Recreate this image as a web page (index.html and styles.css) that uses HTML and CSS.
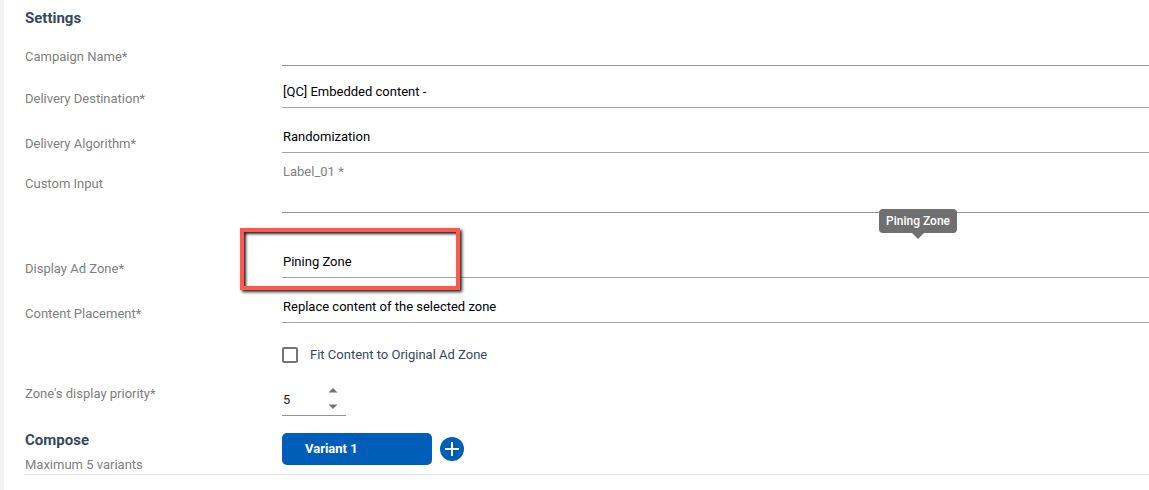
FILE: index.html
```
<!DOCTYPE html>
<html lang="en">
<head>
<meta charset="utf-8">
<title>Campaign Settings</title>
<link rel="stylesheet" href="styles.css">
</head>
<body>
<main class="panel">
  <form class="settings">
    <h2 class="heading">Settings</h2>
    <div class="row row-name">
      <label class="label" for="name">Campaign Name*</label>
      <input class="control dark" id="name" type="text">
    </div>
    <div class="row row-destination">
      <label class="label" for="destination">Delivery Destination*</label>
      <select class="control" id="destination"><option>[QC] Embedded content -</option></select>
    </div>
    <div class="row">
      <label class="label" for="algorithm">Delivery Algorithm*</label>
      <select class="control" id="algorithm"><option>Randomization</option></select>
    </div>
    <div class="row row-custom">
      <span class="label">Custom Input</span>
      <div class="field">
        <label class="label" for="custom">Label_01 *</label>
        <input class="control dark" id="custom" type="text">
      </div>
    </div>
    <div class="row row-zone">
      <label class="label" for="zone">Display Ad Zone*</label>
      <div class="field">
        <select class="control" id="zone"><option>Pining Zone</option></select>
        <div class="highlight"></div>
        <div class="tooltip" role="tooltip">Pining Zone</div>
      </div>
    </div>
    <div class="row">
      <label class="label" for="placement">Content Placement*</label>
      <select class="control" id="placement"><option>Replace content of the selected zone</option></select>
    </div>
    <div class="row row-check">
      <label class="check"><input class="box" type="checkbox">Fit Content to Original Ad Zone</label>
    </div>
    <div class="row row-priority">
      <label class="label" for="priority">Zone's display priority*</label>
      <div class="stepper">
        <input class="number" id="priority" type="number" value="5">
        <div class="arrows">
          <button class="arrow" type="button" aria-label="Increase"><svg width="10" height="5" viewBox="0 0 10 5"><path d="M0.5 4.5L5 0L9.500 4.5Z" fill="#757575"/></svg></button>
          <button class="arrow" type="button" aria-label="Decrease"><svg width="10" height="5" viewBox="0 0 10 5"><path d="M0.5 0.5L5 5L9.500 0.5Z" fill="#757575"/></svg></button>
        </div>
      </div>
    </div>
    <div class="row row-compose">
      <div class="compose">
        <h2 class="heading">Compose</h2>
        <span class="label">Maximum 5 variants</span>
      </div>
      <div class="variants">
        <button class="variant" type="button">Variant 1</button>
        <button class="add" type="button" aria-label="Add variant"><svg width="24" height="24" viewBox="0 0 24 24"><circle cx="12" cy="12" r="12" fill="#005eb8"/><path d="M12 5V19M5 12H19" stroke="#fff" stroke-width="2"/></svg></button>
      </div>
    </div>
  </form>
</main>
</body>
</html>
```
FILE: styles.css
```
* { box-sizing: border-box; }
body {
  margin: 0;
  background: #f3f3f3;
  color: #34495e;
  font: 13px/18px Roboto, "Liberation Sans", sans-serif;
  overflow-x: hidden;
}
button, input, select { font: inherit; margin: 0; }
button { border: 0; padding: 0; cursor: pointer; }
.panel {
  min-height: 100vh;
  margin-left: 4px;
  padding: 8px 0 0 20px;
  background: #fff;
}
.settings { display: flex; flex-direction: column; }
.heading {
  margin: 0;
  padding-left: 1px;
  color: #34495e;
  font-size: 15px;
  font-weight: 700;
  line-height: 20px;
}
.row {
  display: grid;
  grid-template-columns: 258px 1fr;
  align-items: end;
  min-height: 45px;
}
.row-name { min-height: 38px; }
.row-destination { min-height: 42px; }
.label { padding-left: 1px; color: #808080; }
.control {
  appearance: none;
  width: 100%;
  min-width: 0;
  height: 25px;
  padding: 0 1px 6px;
  border: 0;
  border-bottom: 1px solid #a6a6a6;
  border-radius: 0;
  background: transparent;
  color: #000;
  outline: 0;
}
.dark { border-color: #949494; }
.field { position: relative; display: flex; flex-direction: column; }
.row-custom {
  align-items: start;
  padding-top: 10px;
  min-height: 60px;
}
.row-custom > .label { padding-top: 12px; }
.row-custom .control { height: 32px; }
.row-zone { min-height: 65px; }
.highlight {
  position: absolute;
  left: -42px;
  bottom: -12px;
  width: 220px;
  height: 62px;
  border: 4px solid #ff594d;
  box-shadow: 2px 2px 3px #222, inset 2px 2px 3px #222;
  pointer-events: none;
}
.tooltip {
  position: absolute;
  right: 192px;
  bottom: 45px;
  padding: 3px 7px;
  border-radius: 4px;
  background: #707070;
  color: #fff;
  font-size: 12px;
  font-weight: 500;
}
.tooltip::after {
  content: "";
  position: absolute;
  top: 100%;
  left: 50%;
  margin-left: -6px;
  border: 6px solid transparent;
  border-top-color: #707070;
  border-bottom: 0;
}
.row-check { min-height: 41px; }
.check {
  grid-column: 2;
  display: flex;
  align-items: center;
  gap: 12px;
}
.box {
  appearance: none;
  width: 16px;
  height: 16px;
  margin: 0;
  border: 2px solid #757575;
  border-radius: 2px;
}
.row-priority { min-height: 52px; }
.row-priority > .label { padding-bottom: 13px; }
.stepper {
  display: flex;
  width: 64px;
  height: 34px;
  border-bottom: 1px solid #949494;
}
.number {
  appearance: textfield;
  width: 46px;
  padding: 2px 1px 0;
  border: 0;
  background: transparent;
  color: #222;
}
.number::-webkit-inner-spin-button { appearance: none; margin: 0; }
.arrows { display: flex; flex-direction: column; }
.arrow { display: grid; place-items: center; width: 10px; height: 17px; background: none; }
.row-compose {
  align-items: start;
  padding-top: 14px;
  border-bottom: 1px solid #e3e3e3;
}
.compose { display: flex; flex-direction: column; gap: 6px; }
.variants { display: flex; align-items: center; gap: 8px; padding-top: 3px; }
.variant {
  width: 150px;
  height: 32px;
  padding-left: 23px;
  border-radius: 5px;
  background: #005eb8;
  color: #fff;
  font-weight: 700;
  text-align: left;
}
.add { display: flex; border-radius: 50%; background: none; }
```
